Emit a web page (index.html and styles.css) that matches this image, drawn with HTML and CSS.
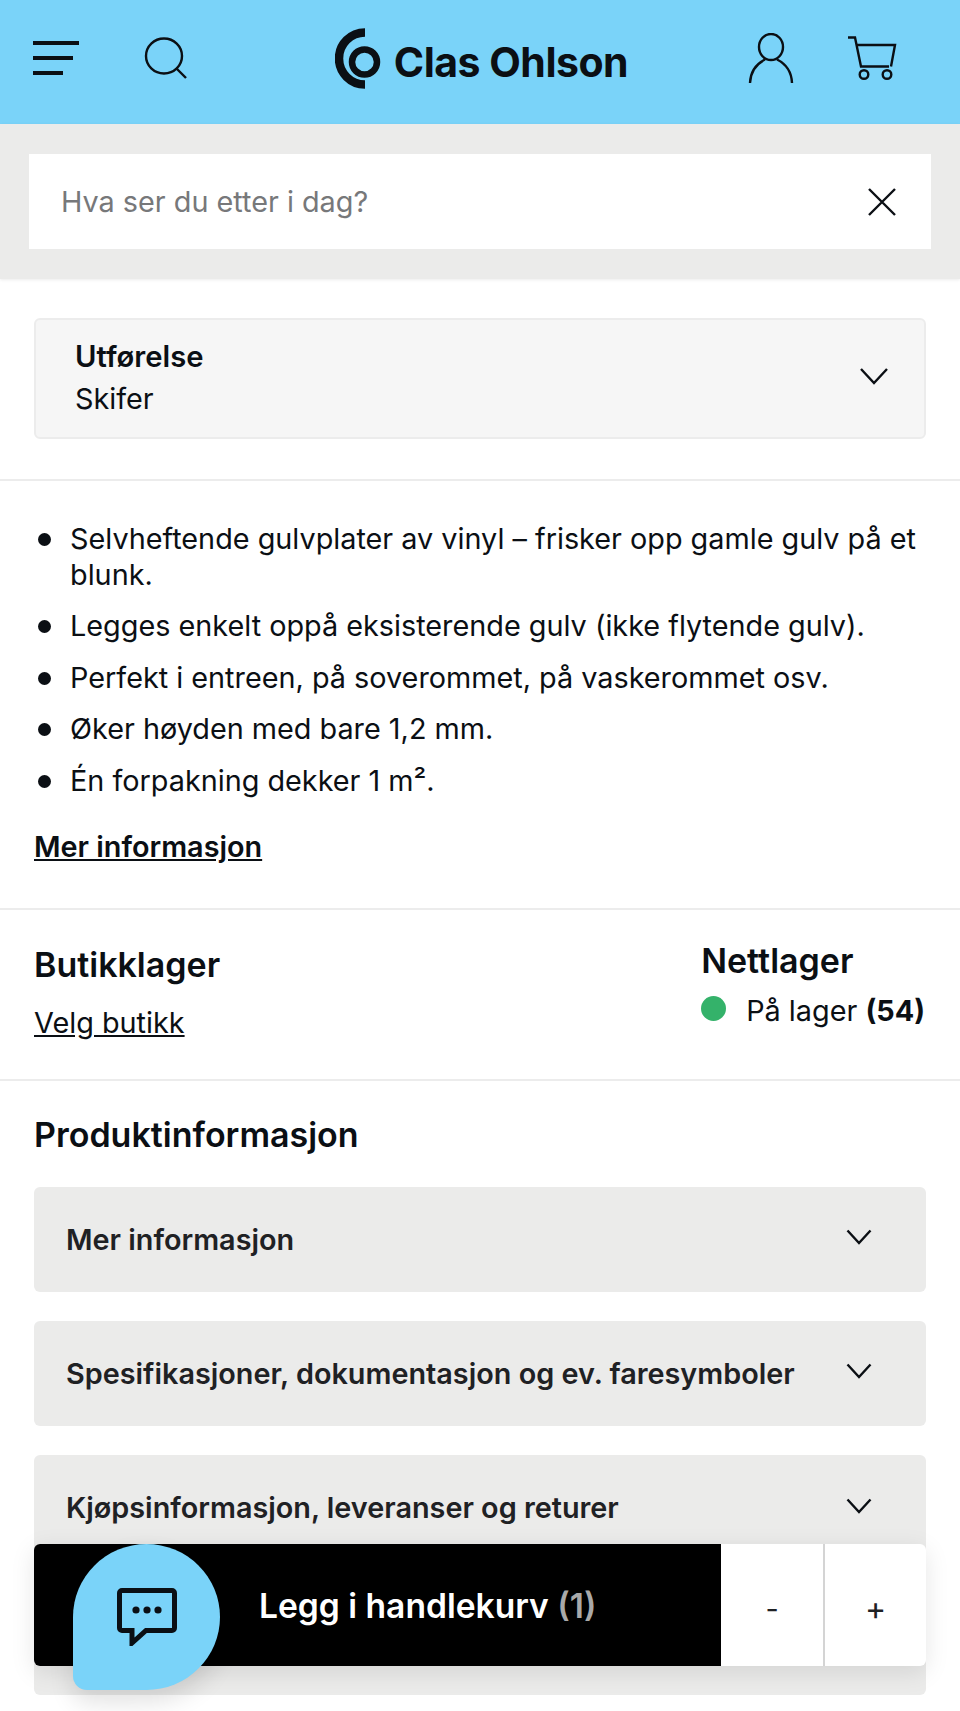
FILE: index.html
```html
<!DOCTYPE html>
<html lang="no">
<head>
  <meta charset="UTF-8">
  <meta name="viewport" content="width=device-width, initial-scale=1.0">
  <title>Clas Ohlson</title>
  <link rel="stylesheet" href="styles.css">
</head>
<body>
  <header class="topbar">
    <div class="topbar-left">
      <svg class="icon-menu" width="48" height="36" viewBox="0 0 48 36" fill="none" stroke="#0b0f14" stroke-width="3.8"><path d="M1 3h46M1 18h40M1 33h30"/></svg>
      <svg class="icon-search" width="44" height="42" viewBox="0 0 44 42" fill="none" stroke="#0b0f14" stroke-width="2.4"><ellipse cx="20" cy="19" rx="18" ry="17.500"/><path d="M32 31l10 10"/></svg>
    </div>
    <a class="logo">
      <svg width="46" height="61" viewBox="0 0 46 61" fill="none" stroke="#0b0f14"><path d="M30 4.500A26 26 0 0 0 30 56.500" stroke-width="8.500"/><circle cx="29.500" cy="34" r="12.500" stroke-width="6.500"/></svg>
      <span class="logo-text">Clas Ohlson</span>
    </a>
    <div class="topbar-right">
      <svg width="48" height="50" viewBox="0 0 48 50" fill="none" stroke="#0b0f14" stroke-width="2.4"><ellipse cx="24" cy="14" rx="12" ry="13"/><path d="M3 50C3.500 37 11 30 18 26.500M45 50C44.500 37 37 30 30 26.500"/></svg>
      <svg width="50" height="44" viewBox="0 0 50 44" fill="none" stroke="#0b0f14" stroke-width="2.4"><path d="M1 1.500h7l6 29h28M10 9h38l-4 21.500"/><circle cx="17" cy="38.500" r="4.300"/><circle cx="40" cy="38.500" r="4.300"/></svg>
    </div>
  </header>

  <div class="search-band">
    <div class="search-box">
      <span class="search-placeholder">Hva ser du etter i dag?</span>
      <svg width="30" height="30" viewBox="0 0 30 30" fill="none" stroke="#0b0f14" stroke-width="2.400"><path d="M2 2l26 26M28 2L2 28"/></svg>
    </div>
  </div>

  <section class="variant-section">
    <div class="variant-box">
      <div>
        <div class="variant-label">Utførelse</div>
        <div class="variant-value">Skifer</div>
      </div>
      <svg class="chevron" width="30" height="18" viewBox="0 0 30 18" fill="none" stroke="#0b0f14" stroke-width="2.400"><path d="M2 2l13 14L28 2"/></svg>
    </div>
  </section>

  <section class="usp-section">
    <ul class="usp-list">
      <li>Selvheftende gulvplater av vinyl – frisker opp gamle gulv på et blunk.</li>
      <li>Legges enkelt oppå eksisterende gulv (ikke flytende gulv).</li>
      <li>Perfekt i entreen, på soverommet, på vaskerommet osv.</li>
      <li>Øker høyden med bare 1,2 mm.</li>
      <li>Én forpakning dekker 1 m².</li>
    </ul>
    <a class="more-link">Mer informasjon</a>
  </section>

  <section class="stock-section">
    <div class="stock-store">
      <h2 class="heading">Butikklager</h2>
      <a class="store-link">Velg butikk</a>
    </div>
    <div class="stock-web">
      <h2 class="heading">Nettlager</h2>
      <div class="stock-status"><span class="dot"></span>På lager <strong>(54)</strong></div>
    </div>
  </section>

  <section class="info-section">
    <h2 class="heading">Produktinformasjon</h2>
    <div class="accordion">
      <span>Mer informasjon</span>
      <svg class="chevron" width="26" height="16" viewBox="0 0 26 16" fill="none" stroke="#0b0f14" stroke-width="2.400"><path d="M1.500 1.500L13 14 24.500 1.500"/></svg>
    </div>
    <div class="accordion">
      <span>Spesifikasjoner, dokumentasjon og ev. faresymboler</span>
      <svg class="chevron" width="26" height="16" viewBox="0 0 26 16" fill="none" stroke="#0b0f14" stroke-width="2.400"><path d="M1.500 1.500L13 14 24.500 1.500"/></svg>
    </div>
    <div class="accordion accordion-tall">
      <span>Kjøpsinformasjon, leveranser og returer</span>
      <svg class="chevron" width="26" height="16" viewBox="0 0 26 16" fill="none" stroke="#0b0f14" stroke-width="2.400"><path d="M1.500 1.500L13 14 24.500 1.500"/></svg>
    </div>
  </section>

  <div class="buy-bar">
    <div class="buy-button">Legg i handlekurv <span class="buy-count">(1)</span></div>
    <div class="qty-button">-</div>
    <div class="qty-button qty-plus">+</div>
  </div>

  <div class="chat-bubble">
    <svg width="60" height="58" viewBox="0 0 60 58" fill="none"><path d="M5 2.500h50a2.500 2.500 0 0 1 2.500 2.500v35a2.500 2.500 0 0 1-2.500 2.500H29L15 55V42.500H5A2.500 2.500 0 0 1 2.500 40V5A2.500 2.500 0 0 1 5 2.500z" stroke="#0b0f14" stroke-width="5"/><circle cx="19" cy="22" r="3.600" fill="#0b0f14"/><circle cx="30" cy="22" r="3.600" fill="#0b0f14"/><circle cx="41" cy="22" r="3.600" fill="#0b0f14"/></svg>
  </div>
</body>
</html>
```

FILE: styles.css
```css
html, body {
  height: 1711px;
  overflow: hidden;
}
body {
  position: relative;
  margin: 0;
  font-family: Inter, Arial, sans-serif;
  font-size: 28.8px;
  color: #0b0f14;
  background: #fff;
}
.topbar {
  display: flex;
  align-items: center;
  justify-content: space-between;
  height: 124px;
  padding: 0 63px 8px 32px;
  box-sizing: border-box;
  background: #7ad3f9;
}
.topbar-left,
.topbar-right {
  display: flex;
  align-items: center;
}
.topbar-left {
  gap: 64px;
}
.topbar-right {
  gap: 52px;
}
.logo {
  display: flex;
  align-items: center;
  gap: 13px;
  margin-left: 28px;
}
.logo-text {
  font-size: 41px;
  font-weight: 700;
  letter-spacing: -0.5px;
  margin-top: 8px;
}
.search-band {
  padding: 30px 29px;
  background: #ebebea;
  box-shadow: 0 1px 3px rgba(0, 0, 0, 0.08);
}
.search-box {
  display: flex;
  align-items: center;
  justify-content: space-between;
  height: 95px;
  padding: 0 34px 0 32px;
  background: #fff;
}
.search-placeholder {
  color: #77787a;
}
.variant-section {
  padding: 39px 34px 40px;
  border-bottom: 2px solid #ececec;
}
.variant-box {
  display: flex;
  align-items: center;
  justify-content: space-between;
  height: 121px;
  padding: 0 35px 0 39px;
  box-sizing: border-box;
  background: #f6f6f6;
  border: 2px solid #ececec;
  border-radius: 6px;
}
.variant-box .chevron {
  margin-top: -6px;
}
.variant-label {
  font-size: 29.200px;
  font-weight: 600;
  line-height: 40px;
}
.variant-value {
  line-height: 43px;
}
.usp-section {
  padding: 40px 34px 44px;
  border-bottom: 2px solid #ececec;
}
.usp-list {
  margin: 0 0 30px;
  padding: 0;
  list-style: none;
}
.usp-list li {
  display: flex;
  line-height: 36px;
  margin-bottom: 15.400px;
}
.usp-list li::before {
  content: "";
  flex: none;
  width: 13px;
  height: 13px;
  margin: 12px 19px 0 4px;
  border-radius: 50%;
  background: #0b0f14;
}
.more-link {
  font-weight: 600;
  text-decoration: underline;
}
.stock-section {
  display: flex;
  justify-content: space-between;
  height: 171px;
  padding: 29px 35px 0 34px;
  box-sizing: border-box;
  border-bottom: 2px solid #ececec;
}
.heading {
  margin: 0;
  font-size: 34px;
  font-weight: 600;
  line-height: 44px;
}
.stock-store .heading {
  margin-top: 4px;
}
.store-link {
  display: block;
  margin-top: 18px;
  text-decoration: underline;
}
.stock-status {
  display: flex;
  align-items: center;
  margin-top: 10px;
  white-space: pre;
}
.dot {
  width: 25px;
  height: 25px;
  margin: -4px 20px 0 0;
  border-radius: 50%;
  background: #34b26a;
}
.info-section {
  padding: 32px 34px 0;
}
.info-section .heading {
  margin-bottom: 30px;
}
.accordion {
  display: flex;
  align-items: center;
  justify-content: space-between;
  height: 105px;
  margin-bottom: 29px;
  padding: 0 54px 0 32px;
  box-sizing: border-box;
  background: #ebebea;
  border-radius: 6px;
  font-weight: 600;
  color: #1f2124;
}
.accordion .chevron {
  margin-top: -4px;
}
.accordion-tall {
  align-items: flex-start;
  height: 240px;
  padding-top: 35px;
}
.accordion-tall .chevron {
  margin-top: 8px;
}
.buy-bar {
  position: absolute;
  left: 34px;
  right: 34px;
  top: 1544px;
  display: flex;
  height: 122px;
  border-radius: 6px;
  overflow: hidden;
  background: #fff;
  box-shadow: 0 6px 24px rgba(0, 0, 0, 0.1);
}
.buy-button {
  flex: 1;
  padding: 42px 0 0 225px;
  line-height: 40px;
  background: #000;
  color: #fff;
  font-size: 33.600px;
  font-weight: 600;
}
.buy-count {
  color: #a9a9a9;
}
.qty-button {
  width: 102px;
  padding-top: 8px;
  line-height: 114px;
  text-align: center;
  color: #1f2124;
}
.qty-plus {
  width: 101px;
  border-left: 2px solid #d4d4d4;
  font-size: 32px;
}
.chat-bubble {
  position: absolute;
  left: 73px;
  top: 1544px;
  display: flex;
  align-items: center;
  justify-content: center;
  width: 147px;
  height: 146px;
  border-radius: 50% 50% 50% 14px;
  background: #7ad3f9;
  box-shadow: 0 12px 24px rgba(0, 0, 0, 0.12);
}
```
